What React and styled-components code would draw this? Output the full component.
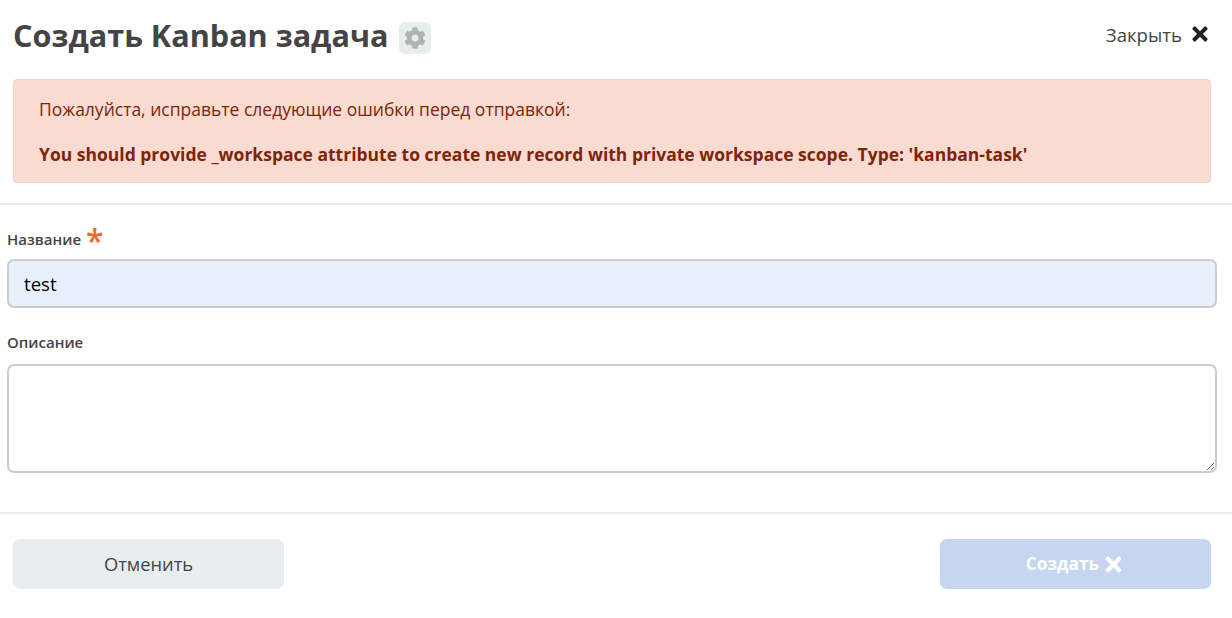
import React from 'react';
import styled, { createGlobalStyle } from 'styled-components';
import { FaCog, FaTimes } from 'react-icons/fa';

const GlobalStyle = createGlobalStyle`
  html, body {
    margin: 0;
    padding: 0;
    background: #fff;
  }
  body {
    font-family: "Open Sans", "Noto Sans", sans-serif;
    color: #444;
  }
  * {
    box-sizing: border-box;
  }
`;

const Page = styled.div`
  width: 1232px;
  height: 618px;
  overflow: hidden;
  background: #fff;
`;

const Header = styled.header`
  height: 79px;
  padding: 14px 21px 0 13px;
  display: flex;
  align-items: flex-start;
  justify-content: space-between;
`;

const TitleGroup = styled.div`
  display: flex;
  align-items: center;
  height: 42px;
`;

const Title = styled.h1`
  margin: 0;
  font-size: 30.6px;
  line-height: 42px;
  font-weight: 700;
  color: #444;
`;

const SettingsButton = styled.span`
  width: 32px;
  height: 32px;
  margin-left: 11px;
  margin-top: 5px;
  border-radius: 6px;
  background: #e8edf0;
  color: #b2b2b2;
  display: flex;
  align-items: center;
  justify-content: center;
  font-size: 22px;
`;

const CloseLink = styled.div`
  display: flex;
  align-items: center;
  height: 40px;
  font-size: 18.6px;
  color: #444;
  svg {
    margin-left: 7px;
    font-size: 22px;
    color: #222;
  }
`;

const Alert = styled.div`
  margin: 0 21px 0 13px;
  height: 104px;
  padding: 17px 25px 0;
  background: #fadbd2;
  border: 1px solid #f8d0c5;
  border-radius: 4px;
  color: #7d2506;
  font-size: 17.5px;
  line-height: 24px;
`;

const AlertText = styled.p`
  margin: 0;
`;

const AlertError = styled.p`
  margin: 21px 0 0;
  font-weight: 700;
`;

const Divider = styled.hr`
  margin: ${(p) => p.$top}px 0 0;
  border: 0;
  height: 2px;
  background: #e8edf0;
`;

const Form = styled.div`
  padding: 0 15px 0 7px;
`;

const Field = styled.div`
  margin-top: ${(p) => p.$top}px;
`;

const Label = styled.label`
  display: flex;
  align-items: flex-start;
  height: 20px;
  margin-bottom: ${(p) => p.$gap}px;
  font-size: 15px;
  line-height: 20px;
  font-weight: 600;
  color: #444;
`;

const Required = styled.span`
  margin-left: 5px;
  font-size: 32px;
  line-height: 24px;
  font-weight: 600;
  color: #f26a35;
  height: 20px;
`;

const TextInput = styled.input`
  display: block;
  width: 100%;
  height: 49px;
  padding: 0 15px;
  border: 2px solid #ccc;
  border-radius: 7px;
  background: #e8f0fe;
  font-family: inherit;
  font-size: 18.6px;
  font-weight: 500;
  color: #000;
  outline: none;
`;

const TextArea = styled.textarea`
  display: block;
  width: 100%;
  height: 109px;
  padding: 10px 15px;
  border: 2px solid #ccc;
  border-radius: 7px;
  background: #fff;
  font-family: inherit;
  font-size: 17px;
  outline: none;
`;

const Footer = styled.footer`
  margin-top: 25px;
  padding: 0 21px 0 13px;
  display: flex;
  justify-content: space-between;
`;

const Button = styled.button`
  width: 271px;
  height: 50px;
  padding: 0 0 2px;
  border: 0;
  border-radius: 7px;
  background: ${(p) => (p.$primary ? '#c6d6f0' : '#e8edf0')};
  color: ${(p) => (p.$primary ? '#fff' : '#444')};
  font-family: inherit;
  font-size: ${(p) => (p.$primary ? 17.3 : 18.3)}px;
  font-weight: ${(p) => (p.$primary ? 700 : 500)};
  display: flex;
  align-items: center;
  justify-content: center;
  svg {
    margin-left: 3px;
    margin-top: 2px;
    font-size: 23px;
  }
`;

export default function App() {
  return (
    <Page>
      <GlobalStyle />
      <Header>
        <TitleGroup>
          <Title>Создать Kanban задача</Title>
          <SettingsButton>
            <FaCog />
          </SettingsButton>
        </TitleGroup>
        <CloseLink>
          Закрыть
          <FaTimes />
        </CloseLink>
      </Header>
      <Alert>
        <AlertText>Пожалуйста, исправьте следующие ошибки перед отправкой:</AlertText>
        <AlertError>
          You should provide _workspace attribute to create new record with private workspace scope. Type: 'kanban-task'
        </AlertError>
      </Alert>
      <Divider $top={20} />
      <Form>
        <Field $top={24}>
          <Label $gap={10}>
            Название
            <Required>*</Required>
          </Label>
          <TextInput defaultValue="test" />
        </Field>
        <Field $top={24}>
          <Label $gap={12}>Описание</Label>
          <TextArea />
        </Field>
      </Form>
      <Divider $top={39} />
      <Footer>
        <Button>Отменить</Button>
        <Button $primary>
          Создать
          <FaTimes />
        </Button>
      </Footer>
    </Page>
  );
}
